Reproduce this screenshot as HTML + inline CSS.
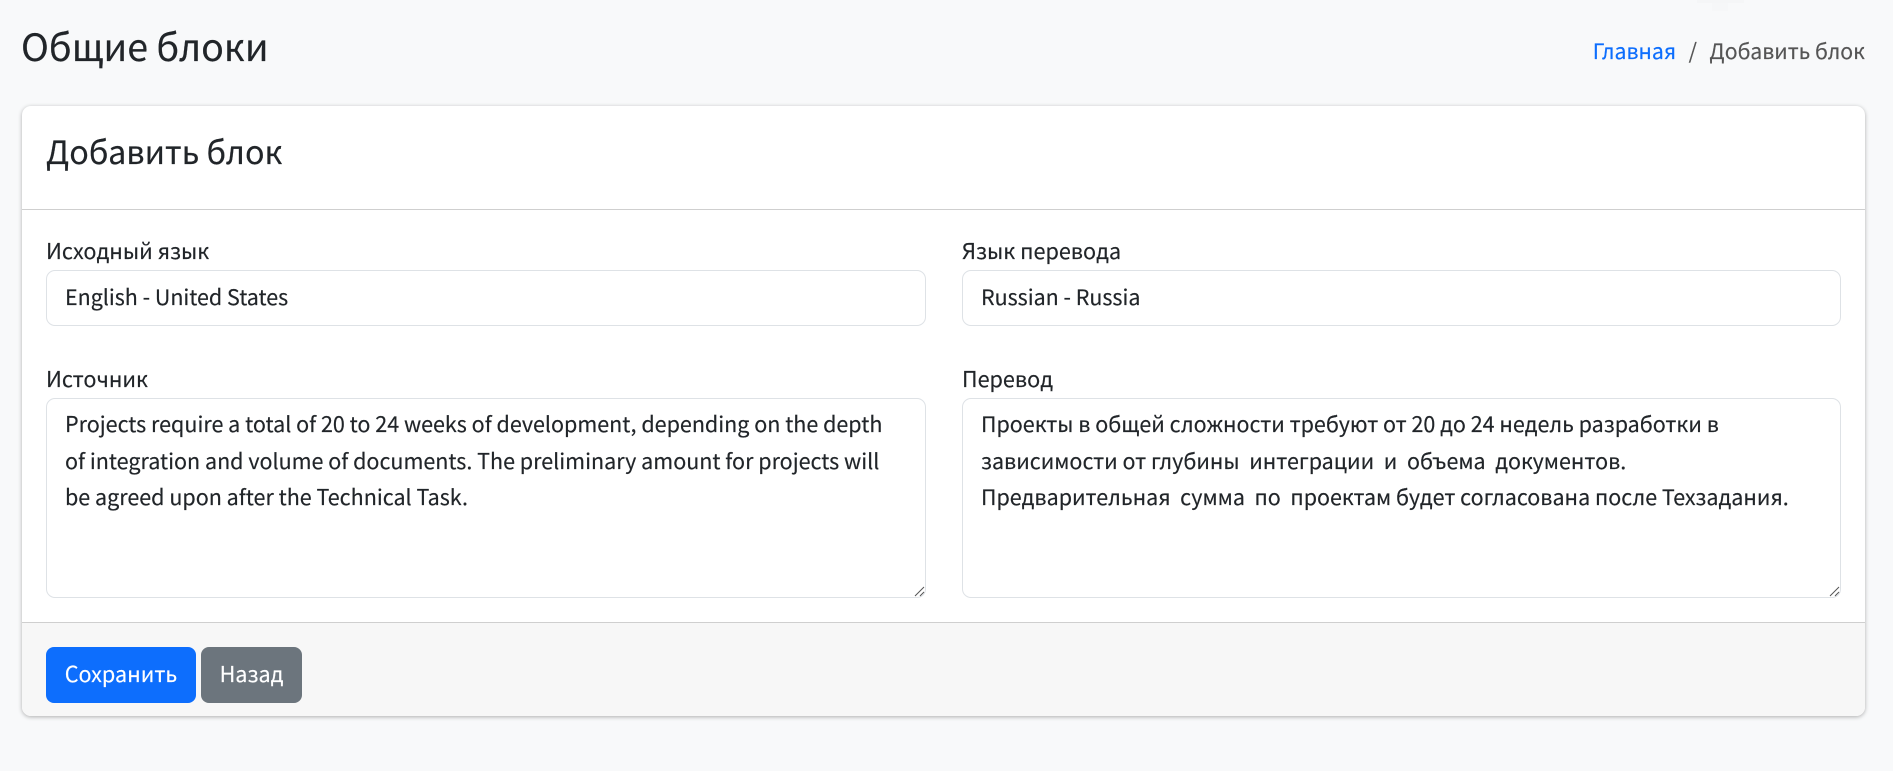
<!DOCTYPE html>
<html lang="ru">
<head>
<meta charset="utf-8">
<title>Добавить блок</title>
<style>
html,body{margin:0;padding:0;width:1893px;height:771px;overflow:hidden;background:#f8f9fa;}
body{position:relative;font-family:"Noto Sans CJK SC","Noto Sans CJK JP","Liberation Sans",sans-serif;color:#212529;-webkit-text-stroke:.15px currentColor;}
.t{position:absolute;white-space:pre;line-height:36px;font-size:21.6px;}
.v{font-size:21.45px;}
.box{position:absolute;background:#fff;border:1px solid #dee2e6;border-radius:9px;box-sizing:border-box;}
#card{position:absolute;left:22px;top:106px;width:1843px;height:610px;background:#fff;border-radius:9px;box-shadow:0 1px 4px rgba(0,0,0,.3);overflow:hidden;}
#hl{position:absolute;left:0;right:0;top:103px;height:1px;background:#cfcfcf;}
#foot{position:absolute;left:0;right:0;top:516px;height:94px;background:#f7f7f7;border-top:1px solid #cfcfcf;box-sizing:border-box;}
.btn{position:absolute;top:647px;height:56px;border-radius:8px;color:#fff;font-size:21.6px;line-height:54px;text-align:center;}
</style>
</head>
<body>
<div style="position:absolute;left:1697px;top:0;width:47px;height:3px;background:#f5f6f7;"></div>
<div style="position:absolute;left:1712px;top:3px;width:16px;height:8px;background:#f6f7f8;"></div>

<div class="t" style="left:21px;top:20px;font-size:37.6px;line-height:50px;">Общие блоки</div>
<div class="t" style="right:28px;top:33px;font-size:21.25px;color:#555;"><span style="color:#0d6efd;">Главная</span><span style="padding:0 12.5px;">/</span>Добавить блок</div>

<div id="card"><div id="hl"></div><div id="foot"></div></div>

<div class="t" style="left:46px;top:130px;font-size:32.3px;line-height:42px;">Добавить блок</div>

<div class="t" style="left:46px;top:233px;">Исходный язык</div>
<div class="t" style="left:962px;top:233px;">Язык перевода</div>
<div class="box" style="left:46px;top:270px;width:880px;height:56px;"></div>
<div class="box" style="left:962px;top:270px;width:879px;height:56px;"></div>
<div class="t v" style="left:65px;top:279px;">English - United States</div>
<div class="t v" style="left:981px;top:279px;">Russian - Russia</div>

<div class="t" style="left:46px;top:361px;">Источник</div>
<div class="t" style="left:962px;top:361px;">Перевод</div>
<div class="box" style="left:46px;top:398px;width:880px;height:200px;"></div>
<div class="box" style="left:962px;top:398px;width:879px;height:200px;"></div>
<div class="t v" style="left:65px;top:406px;line-height:36.5px;font-size:21.51px;">Projects require a total of 20 to 24 weeks of development, depending on the depth
of integration and volume of documents. The preliminary amount for projects will
be agreed upon after the Technical Task.</div>
<div class="t v" style="left:981px;top:406px;line-height:36.5px;font-size:21.47px;">Проекты в общей сложности требуют от 20 до 24 недель разработки в
зависимости от глубины  интеграции  и  объема  документов.
Предварительная  сумма  по  проектам будет согласована после Техзадания.</div>
<svg style="position:absolute;left:914px;top:586px" width="11" height="11"><path d="M1 10L10 1M6 10L10 6" stroke="#555" stroke-width="1" fill="none"/></svg>
<svg style="position:absolute;left:1829px;top:586px" width="11" height="11"><path d="M1 10L10 1M6 10L10 6" stroke="#555" stroke-width="1" fill="none"/></svg>

<div class="btn" style="left:46px;width:150px;background:#0d6efd;">Сохранить</div>
<div class="btn" style="left:201px;width:101px;background:#6c757d;">Назад</div>
</body>
</html>
